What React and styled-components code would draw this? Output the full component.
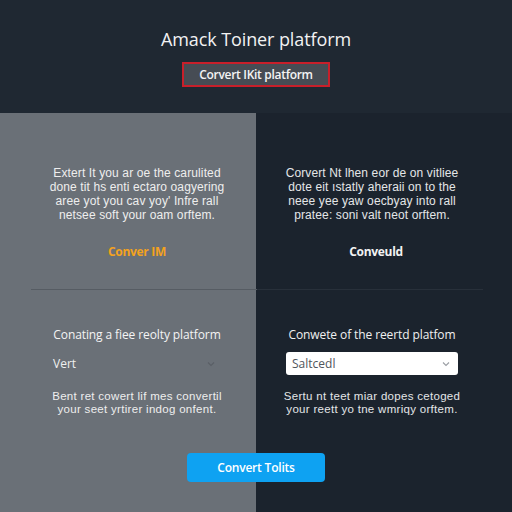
import styled, { createGlobalStyle } from 'styled-components'

const GlobalStyle = createGlobalStyle`
  html, body {
    margin: 0;
    padding: 0;
    background: #1b232d;
  }
  body {
    font-family: "Open Sans", "Liberation Sans", sans-serif;
    -webkit-font-smoothing: antialiased;
  }
`

const Page = styled.div`
  width: 512px;
  height: 512px;
  display: flex;
  flex-direction: column;
  overflow: hidden;
`

const Header = styled.header`
  height: 113px;
  background: #1f2832;
  display: flex;
  flex-direction: column;
  align-items: center;
  box-sizing: border-box;
  padding-top: 27px;
`

const Title = styled.h1`
  margin: 0;
  font-size: 18px;
  line-height: 24px;
  font-weight: 400;
  color: #f2f2f2;
  letter-spacing: -0.1px;
`

const HeaderButton = styled.button`
  margin-top: 11px;
  width: 148px;
  height: 25px;
  border: 2px solid #c81f2a;
  background: #464c54;
  color: #f4f4f4;
  font-family: inherit;
  font-size: 12px;
  font-weight: 600;
  letter-spacing: -0.3px;
  padding: 0;
`

const Body = styled.main`
  flex: 1;
  display: flex;
  flex-direction: column;
  background: linear-gradient(to right, #6a7077 0 256px, #1b232d 256px 100%);
`

const Row = styled.section`
  display: grid;
  grid-template-columns: 256px 256px;
  height: ${(p) => p.$height}px;
`

const Column = styled.div`
  box-sizing: border-box;
  padding-left: ${(p) => p.$inset}px;
  padding-top: ${(p) => p.$top}px;
`

const Content = styled.div`
  width: 172px;
  display: flex;
  flex-direction: column;
  align-items: center;
  text-align: center;
`

const Paragraph = styled.p`
  margin: 0;
  white-space: nowrap;
  font-family: "Liberation Sans", Arial, sans-serif;
  font-size: 12px;
  line-height: 14px;
  color: ${(p) => (p.$dark ? '#e4e6e8' : '#eeeeee')};
  letter-spacing: 0.12px;
`

const ActionLink = styled.a`
  margin-top: 22px;
  margin-left: ${(p) => p.$shift || 0}px;
  font-size: 12px;
  line-height: 16px;
  font-weight: 700;
  color: ${(p) => p.$color};
  letter-spacing: -0.3px;
`

const Divider = styled.hr`
  margin: 0 29px 0 31px;
  height: 1px;
  border: 0;
  background: linear-gradient(to right, #565c63 0 50%, #28303a 50% 100%);
`

const SectionTitle = styled.h2`
  margin: 0;
  font-size: 12px;
  line-height: 16px;
  font-weight: 400;
  color: ${(p) => (p.$dark ? '#f0f0f0' : '#f4f4f4')};
  letter-spacing: -0.1px;
  white-space: nowrap;
`

const Select = styled.div`
  margin-top: 9px;
  width: 172px;
  height: 23px;
  box-sizing: border-box;
  display: flex;
  align-items: center;
  justify-content: space-between;
  padding: 0 8px 0 ${(p) => (p.$filled ? 6 : 2)}px;
  border-radius: 3px;
  background: ${(p) => (p.$filled ? '#ffffff' : 'transparent')};
  color: ${(p) => (p.$filled ? '#50555c' : '#f0f0f0')};
  font-size: 12px;
  text-align: left;
`

const Chevron = ({ color }) => (
  <svg width="8" height="6" viewBox="0 0 8 6" fill="none">
    <path d="M1 1.5 L4 4.5 L7 1.5" stroke={color} strokeWidth="1.1" />
  </svg>
)

const Note = styled(Paragraph)`
  margin-top: 15px;
  line-height: 13px;
  font-size: 11.5px;
  letter-spacing: 0.3px;
`

const Footer = styled.footer`
  display: flex;
  justify-content: center;
  padding-top: 35px;
`

const PrimaryButton = styled.button`
  width: 138px;
  height: 29px;
  border: 0;
  border-radius: 4px;
  background: #0ea2f2;
  color: #ffffff;
  font-family: inherit;
  font-size: 12px;
  font-weight: 600;
  letter-spacing: -0.2px;
`

export default function App() {
  return (
    <Page>
      <GlobalStyle />
      <Header>
        <Title>Amack Toiner platform</Title>
        <HeaderButton>Corvert IKit platform</HeaderButton>
      </Header>
      <Body>
        <Row $height={176}>
          <Column $inset={51} $top={53}>
            <Content>
              <Paragraph>
                Extert It you ar oe the carulited<br />
                done tit hs enti ectaro oagyering<br />
                aree yot you cav yoy' Infre rall<br />
                netsee soft your oam orftem.
              </Paragraph>
              <ActionLink $color="#f3a21e">Conver IM</ActionLink>
            </Content>
          </Column>
          <Column $inset={30} $top={53}>
            <Content>
              <Paragraph $dark>
                Corvert Nt lhen eor de on vitliee<br />
                dote eit ıstatly aheraii on to the<br />
                neee yee yaw oecbyay into rall<br />
                pratee: soni valt neot orftem.
              </Paragraph>
              <ActionLink $color="#f2f2f2" $shift={8}>Conveuld</ActionLink>
            </Content>
          </Column>
        </Row>
        <Divider />
        <Row $height={128}>
          <Column $inset={51} $top={37}>
            <Content>
              <SectionTitle>Conating a fiee reolty platform</SectionTitle>
              <Select>
                <span>Vert</span>
                <Chevron color="#5a5f66" />
              </Select>
              <Note>
                Bent ret cowert lif mes convertil<br />
                your seet yrtirer indog onfent.
              </Note>
            </Content>
          </Column>
          <Column $inset={30} $top={37}>
            <Content>
              <SectionTitle $dark>Conwete of the reertd platfom</SectionTitle>
              <Select $filled>
                <span>Saltcedl</span>
                <Chevron color="#9a9ea4" />
              </Select>
              <Note $dark>
                Sertu nt teet miar dopes cetoged<br />
                your reett yo tne wmriqy orftem.
              </Note>
            </Content>
          </Column>
        </Row>
        <Footer>
          <PrimaryButton>Convert Tolits</PrimaryButton>
        </Footer>
      </Body>
    </Page>
  )
}
